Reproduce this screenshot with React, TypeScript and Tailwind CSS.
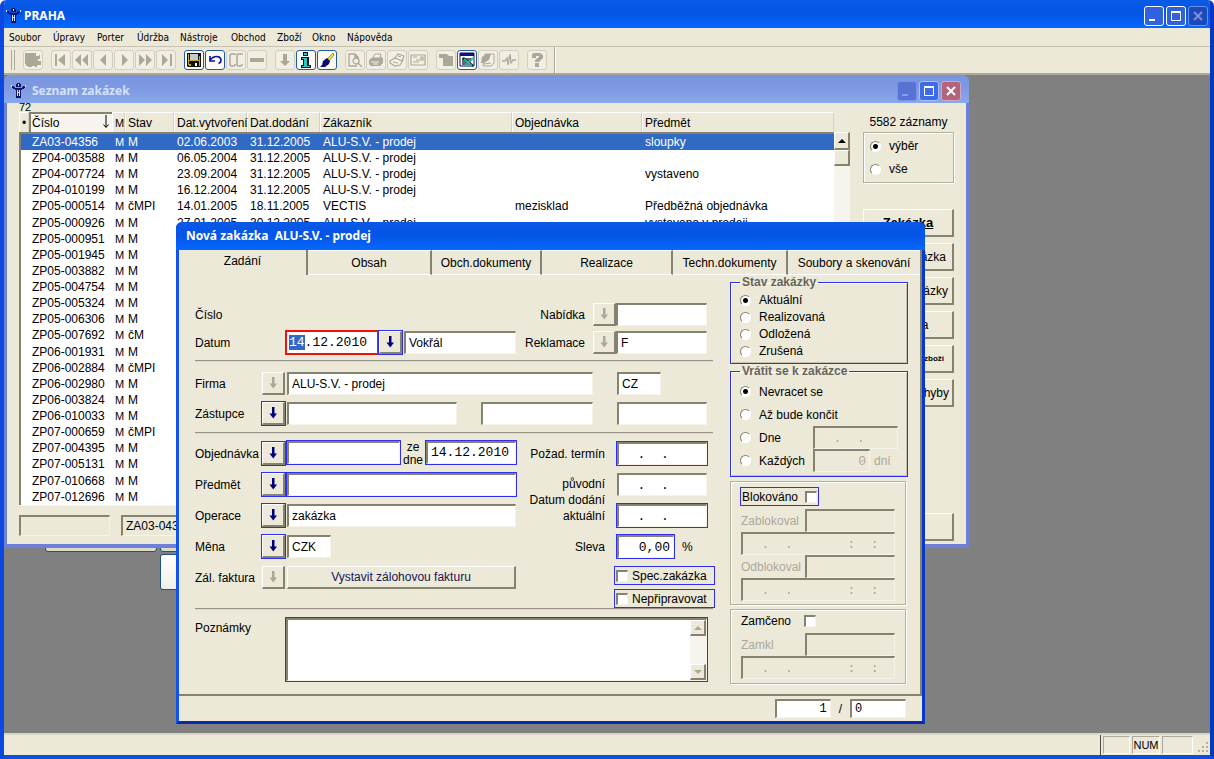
import React, { useEffect, useRef } from 'react';
import clsx from 'clsx';

const SUNKEN =
  'border-t-2 border-l-2 border-r border-b border-t-[#85826f] border-l-[#85826f] border-r-[#f6f4ea] border-b-[#f6f4ea]';
const RAISED =
  'border-t border-l border-r-2 border-b-2 border-t-white border-l-white border-r-[#85826f] border-b-[#85826f] bg-[#ece9d8]';
const BLUE_RING = 'ring-1 ring-[#2f2ff0]';

interface Order {
  id: string;
  stav: string;
  created?: string;
  delivery?: string;
  customer?: string;
  order?: string;
  subject?: string;
}

const ORDERS: Order[] = [
  { id: 'ZA03-04356', stav: 'M', created: '02.06.2003', delivery: '31.12.2005', customer: 'ALU-S.V. - prodej', subject: 'sloupky' },
  { id: 'ZP04-003588', stav: 'M', created: '06.05.2004', delivery: '31.12.2005', customer: 'ALU-S.V. - prodej' },
  { id: 'ZP04-007724', stav: 'M', created: '23.09.2004', delivery: '31.12.2005', customer: 'ALU-S.V. - prodej', subject: 'vystaveno' },
  { id: 'ZP04-010199', stav: 'M', created: '16.12.2004', delivery: '31.12.2005', customer: 'ALU-S.V. - prodej' },
  { id: 'ZP05-000514', stav: 'čMPI', created: '14.01.2005', delivery: '18.11.2005', customer: 'VECTIS', order: 'mezisklad', subject: 'Předběžná objednávka' },
  { id: 'ZP05-000926', stav: 'M', created: '27.01.2005', delivery: '30.12.2005', customer: 'ALU-S.V. - prodej', subject: 'vystaveno v prodeji' },
  { id: 'ZP05-000951', stav: 'M' },
  { id: 'ZP05-001945', stav: 'M' },
  { id: 'ZP05-003882', stav: 'M' },
  { id: 'ZP05-004754', stav: 'M' },
  { id: 'ZP05-005324', stav: 'M' },
  { id: 'ZP05-006306', stav: 'M' },
  { id: 'ZP05-007692', stav: 'čM' },
  { id: 'ZP06-001931', stav: 'M' },
  { id: 'ZP06-002884', stav: 'čMPI' },
  { id: 'ZP06-002980', stav: 'M' },
  { id: 'ZP06-003824', stav: 'M' },
  { id: 'ZP06-010033', stav: 'M' },
  { id: 'ZP07-000659', stav: 'čMPI' },
  { id: 'ZP07-004395', stav: 'M' },
  { id: 'ZP07-005131', stav: 'M' },
  { id: 'ZP07-010668', stav: 'M' },
  { id: 'ZP07-012696', stav: 'M' },
];

const MENU = [
  { label: 'Soubor', width: 'w-[44px]' },
  { label: 'Úpravy', width: 'w-[44px]' },
  { label: 'Porter', width: 'w-[40px]' },
  { label: 'Údržba', width: 'w-[43px]' },
  { label: 'Nástroje', width: 'w-[51px]' },
  { label: 'Obchod', width: 'w-[46px]' },
  { label: 'Zboží', width: 'w-[35px]' },
  { label: 'Okno', width: 'w-[35px]' },
  { label: 'Nápověda', width: 'w-[60px]' },
];

const G = '#aca899';

// Toolbar glyphs, drawn on a 16x16 grid
const GLYPHS: Record<string, React.ReactNode> = {
  door: <path fill={G} d="M0 1h11v3h3V3h1v4h-2v2h3v4h-4v2h-2v-1H7v1H3v-1H1v-2H0z" />,
  first: <path fill={G} d="M2 2h2v12H2zM12 2v12L5 8z" />,
  rewind: <path fill={G} d="M7 2v12L1 8zM14 2v12L8 8z" />,
  prev: <path fill={G} d="M11 2v12L5 8z" />,
  next: <path fill={G} d="M6 2v12l6-6z" />,
  forward: <path fill={G} d="M2 2v12l6-6zM9 2v12l6-6z" />,
  last: <path fill={G} d="M4 2v12l6-6zM12 2h2v12h-2z" />,
  save: (
    <>
      <path fill="#111" d="M1 1h14v14H2l-1-1z" />
      <path fill="#b8a83c" d="M2 2h1v11H2zM13 4h1v10h-1zM3 8h10v1H3zM3 12h2v2H3z" />
      <path fill="#c9c9c9" d="M4 2h8v6H4z" />
      <path fill="#fff" d="M9 11h2v3H9z" />
    </>
  ),
  undo: (
    <path fill="none" stroke="#0a12a0" strokeWidth="1.6" d="M3 4v5h5M3 8l3-2.500c3-2 8-1 8 2.500 0 2-1 3-2.500 3.500" />
  ),
  copy: <path fill="none" stroke={G} strokeWidth="1.500" d="M7 3V2H3L2 3v10l1 1h3l1-1v-1M14 3V2h-4L9 3v10l1 1h3l1-1v-1" />,
  minus: <path fill={G} d="M1 6h14v4H1z" />,
  down: <path fill={G} d="M6 2h4v7h3l-5 5-5-5h3z" />,
  info: (
    <>
      <path fill="#111" d="M5 0h5v4H5zM3 5h8v8h2v3H3v-3h2V8H3z" />
      <path fill="#27c7c7" d="M6 1h3v2H6zM4 6h5v8h3v1H4v-1h2V7H4z" />
    </>
  ),
  brush: (
    <>
      <path fill="#f2e233" stroke="#333" strokeWidth=".5" d="M14 1l1 2-5 6-2-2z" />
      <path fill="#0c0c78" d="M8 6l3 3-1 3-4 3H1l2-2 1-4z" />
    </>
  ),
  preview: (
    <path fill="none" stroke={G} strokeWidth="1.300" d="M10 14H2V2h6l3 3v2M8 2v3h3M9 6a3 3 0 1 0 .1 6A3 3 0 0 0 9 6M11 11l4 4" />
  ),
  print: (
    <>
      <path fill={G} d="M1 8l4-3h9l1 2v4l-3 3H3l-2-2z" />
      <path fill="#f4f2e8" stroke={G} d="M5 6l2-4h6l-1 4z" />
      <path stroke="#f4f2e8" d="M3 10h8M5 12h5" />
    </>
  ),
  cards: (
    <>
      <path fill="#f4f2e8" stroke={G} strokeWidth="1.200" d="M1 9l5-3 8 2-3 5-5 1-5-3z" />
      <path fill="#f4f2e8" stroke={G} strokeWidth="1.200" d="M6 6l3-4 6 2-2 5z" />
      <path stroke={G} d="M9 4l3 1M4 10l5 1" />
    </>
  ),
  mail: <path fill="none" stroke={G} strokeWidth="1.200" d="M1 3h14v10H1zM3 5h4M3 10h6M6 8h4M11 5h2v3h-2z" />,
  page: <path fill={G} d="M1 2h8l2 2h4v10H5V6H1z" />,
  excel: (
    <>
      <path fill="#fff" stroke="#111060" d="M1 1h14v13H1z" />
      <path fill="#111080" d="M1 1h14v3H1z" />
      <path fill="#666" d="M3 6h9v7H3z" />
      <path stroke="#111" strokeWidth="2.500" d="M4 6l10 8" />
      <path stroke="#23b5b0" strokeWidth="2" d="M6 14l8-8M5 7l8 7" />
    </>
  ),
  script: (
    <>
      <path fill="#f4f2e8" stroke={G} d="M5 2h9v9l-3 3H3z" />
      <path fill={G} d="M2 5l4-3h5l-2 6-5 3H1z" />
      <path stroke={G} d="M4 12l7-1" />
    </>
  ),
  pulse: <path fill="none" stroke={G} strokeWidth="1.300" d="M1 9h3l2-3 1 7 2-11 1 9 2-3h3" />,
  help: (
    <path fill={G} d="M3 2l2-1h6l3 2v3l-4 4H6V8l4-3V4H7v2H3zM6 11h4v4H6z" />
  ),
};

const TOOL_GROUPS: string[][] = [
  ['door'],
  ['first', 'rewind', 'prev', 'next', 'forward', 'last'],
  ['save', 'undo', 'copy', 'minus'],
  ['down', 'info', 'brush'],
  ['preview', 'print', 'cards', 'mail'],
  ['page', 'excel', 'script', 'pulse'],
  ['help'],
];

const ACTIVE_TOOLS = ['save', 'undo', 'info', 'brush', 'excel'];

function PorterIcon() {
  return (
    <svg viewBox="0 0 16 16" className="h-4 w-4 shrink-0" shapeRendering="crispEdges">
      <path fill="#0c1470" d="M7 0h3v1h1v3H6V1h1zM2 3h2v1h1v1h7V4h1V3h2v2h-1v1h-2v1h-1v8H6V7H5V6H3V5H2z" />
      <path fill="#dfe8ff" d="M8 1h1v2H8zM7 7h1v6H7zM9 7h1v6H9zM8 9h1v1H8zM1 2h1v2H1zM15 2h1v2h-1z" />
    </svg>
  );
}

interface CaptionButtonProps {
  kind: 'min' | 'max' | 'close';
  className: string;
  glyph?: string;
}

function CaptionButton({ kind, className, glyph = '#ffffff' }: CaptionButtonProps) {
  return (
    <button aria-label={kind} className={clsx('flex h-[20px] w-[20px] items-center justify-center rounded-[3px] border', className)}>
      <svg viewBox="0 0 14 14" className="h-[14px] w-[14px]" fill="none" stroke={glyph}>
        {kind === 'min' && <path strokeWidth="2" d="M2 11h6" />}
        {kind === 'max' && <path d="M2.500 3.500h9v8h-9zM2 2.500h10" />}
        {kind === 'close' && <path strokeWidth="2" d="M3 3l8 8M11 3l-8 8" />}
      </svg>
    </button>
  );
}

interface FieldProps {
  label: string;
  value?: string;
  width: string;
  mono?: boolean;
  blue?: boolean;
  muted?: boolean;
  right?: boolean;
  id?: string;
}

function Field({ label, value = '', width, mono, blue, muted, right, id }: FieldProps) {
  return (
    <input
      id={id}
      aria-label={label}
      defaultValue={value}
      className={clsx(
        'h-[23px] shrink-0 px-[3px] outline-none',
        SUNKEN,
        width,
        mono && "font-['Liberation_Mono',monospace] text-[13px]",
        blue && BLUE_RING,
        muted ? 'bg-[#ece9d8] text-[#aca899]' : 'bg-white',
        right && 'text-right'
      )}
    />
  );
}

function ArrowButton({ active }: { active?: boolean }) {
  return (
    <button
      aria-label="Vybrat"
      className={clsx('flex h-[23px] w-[23px] shrink-0 items-center justify-center', RAISED, active && BLUE_RING)}
    >
      <svg viewBox="0 0 12 14" className="h-[14px] w-3">
        <path fill={active ? '#00007c' : '#aca899'} d="M5 1h2.500v6.500H10L6.250 12.500 2.500 7.500H5z" />
      </svg>
    </button>
  );
}

function Radio({ name, label, checked }: { name: string; label: string; checked?: boolean }) {
  return (
    <label className="flex items-center gap-2">
      <input
        type="radio"
        name={name}
        defaultChecked={checked}
        className="h-[11px] w-[11px] appearance-none rounded-full border border-t-[#85826f] border-l-[#85826f] border-r-white border-b-white bg-white checked:bg-[radial-gradient(circle,#000_2px,#fff_3px)]"
      />
      {label}
    </label>
  );
}

function CheckBox({ id }: { id?: string }) {
  return <input id={id} type="checkbox" className={clsx('h-3 w-3 shrink-0 appearance-none bg-white', SUNKEN)} />;
}

function Rule() {
  return <hr className="h-[2px] w-[518px] border-t border-b border-t-[#96938a] border-b-[#dcdad0]" />;
}

function OrderList() {
  const th = (text: string) => (
    <div className="h-5 border-t border-l border-r border-t-white border-l-white border-r-[#d5d2c0] pl-[2px] leading-5">{text}</div>
  );
  return (
    <section className="absolute top-0 left-0 flex h-[473px] w-[965px] flex-col rounded-t-md border-r-[3px] border-b-[4px] border-l-[3px] border-[#6f80d8] bg-[#ece9d8]">
      <header className="-mx-[3px] flex h-7 shrink-0 items-center gap-1.5 rounded-t-md bg-gradient-to-b from-[#7a93df] via-[#7f9be3] to-[#88a9ea] pt-1 pr-2 pl-1.5">
        <PorterIcon />
        <h2 className="flex-1 font-['Noto_Sans',sans-serif] text-[12px] font-bold text-[#d5e1f8]">Seznam zakázek</h2>
        <div className="flex gap-[2px]">
          <CaptionButton kind="min" className="border-[#7b90e0] bg-[#5873d6]" glyph="#8b9fe8" />
          <CaptionButton kind="max" className="border-[#a9c0f5] bg-[#3f6be4]" />
          <CaptionButton kind="close" className="border-[#c8a9c8] bg-[#b4637d]" />
        </div>
      </header>

      <div className="flex flex-1 gap-[13px] pl-3">
        <div className="flex w-[831px] flex-col">
          <div className="h-[9px] text-[11px] leading-[9px]">72</div>
          <div className="flex border-b border-[#f6f4ea]">
            <table className="w-[815px] table-fixed border-separate border-spacing-0 text-left whitespace-nowrap">
              <colgroup>
                <col className="w-[10px]" />
                <col className="w-[83px]" />
                <col className="w-[13px]" />
                <col className="w-[49px]" />
                <col className="w-[73px]" />
                <col className="w-[73px]" />
                <col className="w-[192px]" />
                <col className="w-[130px]" />
                <col />
              </colgroup>
              <thead>
                <tr className="[&>th]:border-b-2 [&>th]:border-[#85826f] [&>th]:p-0 [&>th]:font-normal">
                  <th>{th('•')}</th>
                  <th>
                    <div className="flex h-5 justify-between border-t-2 border-l-2 border-[#85826f] bg-[#f6f4ec] pr-[3px] pl-px leading-[18px]">
                      Číslo
                      <svg viewBox="0 0 6 14" className="mt-px h-[14px] w-[6px]" fill="none" stroke="#000">
                        <path d="M3 0v12M.5 9.500L3 12.500l2.500-3" />
                      </svg>
                    </div>
                  </th>
                  <th className="text-[11px]">{th('M')}</th>
                  <th>{th('Stav')}</th>
                  <th>{th('Dat.vytvoření')}</th>
                  <th>{th('Dat.dodání')}</th>
                  <th>{th('Zákazník')}</th>
                  <th>{th('Objednávka')}</th>
                  <th>{th('Předmět')}</th>
                </tr>
              </thead>
              <tbody className="bg-white">
                {ORDERS.map((o, i) => (
                  <tr
                    key={o.id}
                    className={clsx(
                      'leading-4 [&>td]:p-0 [&>td]:pl-[3px] [&>td:first-child]:border-l-2 [&>td:first-child]:border-[#85826f]',
                      i % 8 === 5 ? 'h-[17px]' : 'h-4',
                      i === 0 && 'bg-[#316ac5] text-white'
                    )}
                  >
                    <td></td>
                    <td>{o.id}</td>
                    <td className="text-[11px]">M</td>
                    <td>{o.stav}</td>
                    <td>{o.created}</td>
                    <td>{o.delivery}</td>
                    <td>{o.customer}</td>
                    <td>{o.order}</td>
                    <td>{o.subject}</td>
                  </tr>
                ))}
              </tbody>
            </table>
            <div className="mt-5 flex w-4 flex-col bg-[#f6f4ec]">
              <button aria-label="Nahoru" className={clsx('flex h-[18px] items-center justify-center', RAISED)}>
                <svg viewBox="0 0 8 4" className="h-1 w-2">
                  <path d="M4 0l4 4H0z" />
                </svg>
              </button>
              <div className={clsx('h-4', RAISED)} />
            </div>
          </div>
          <div className="mt-[9px] flex gap-[11px]">
            <input aria-label="Filtr" className={clsx('h-[21px] w-[91px] bg-[#ece9d8] px-[3px]', SUNKEN)} />
            <input aria-label="Hledat" defaultValue="ZA03-04356" className={clsx('h-[21px] w-[130px] bg-[#ece9d8] px-[3px]', SUNKEN)} />
          </div>
        </div>

        <aside className="flex w-[91px] flex-col pb-[3px]">
          <p className="mt-3 h-[17px] text-center leading-[14px]">5582 záznamy</p>
          <div className="flex h-[51px] flex-col justify-center gap-[8px] border border-[#b3b0a0] pl-1.5 shadow-[1px_1px_0_#fff,inset_1px_1px_0_#fff] leading-[15px]">
            <Radio name="rozsah" label="výběr" checked />
            <Radio name="rozsah" label="vše" />
          </div>
          <div className="mt-[26px] flex flex-col gap-1.5 whitespace-nowrap">
            <button className={clsx('h-7 text-[13px] font-bold underline', RAISED)}>Zakázka</button>
            <button className={clsx('h-7 pr-1.5 text-right', RAISED)}>Zakázka</button>
            <button className={clsx('h-7 pr-1 text-right', RAISED)}>Zakázky</button>
            <button className={clsx('h-7', RAISED)}>Faktura</button>
            <button className={clsx('h-7 pr-2 text-right text-[8px] font-bold', RAISED)}>Zásoba zboží</button>
            <button className={clsx('h-7 pr-[3px] text-right', RAISED)}>Pohyby</button>
          </div>
          <button aria-label="Zavřít" className={clsx('mt-auto h-7', RAISED)} />
        </aside>
      </div>
    </section>
  );
}

const TABS = [
  { label: 'Obsah', width: 'w-[124px]' },
  { label: 'Obch.dokumenty', width: 'w-[110px]' },
  { label: 'Realizace', width: 'w-[131px]' },
  { label: 'Techn.dokumenty', width: 'w-[115px]' },
  { label: 'Soubory a skenování', width: 'flex-1' },
];

function NewOrderForm() {
  const dateRef = useRef<HTMLInputElement>(null);

  useEffect(() => {
    // day part is selected when the form opens
    dateRef.current?.focus();
    dateRef.current?.setSelectionRange(0, 2);
  }, []);

  return (
    <div className="flex w-[520px] flex-col pt-[27px]">
      <div className="flex h-[25px] items-center justify-between pr-2">
        <span>Číslo</span>
        <div className="flex items-center">
          <label htmlFor="nabidka" className="mr-2">Nabídka</label>
          <ArrowButton />
          <Field id="nabidka" label="Nabídka" width="w-[91px]" />
        </div>
      </div>
      <div className="mt-[3px] flex h-[25px] items-center pr-2">
        <label htmlFor="datum" className="w-[92px]">Datum</label>
        <input
          id="datum"
          ref={dateRef}
          defaultValue="14.12.2010"
          className="h-[21px] w-[90px] bg-white px-[2px] font-['Liberation_Mono',monospace] text-[13px] ring-2 ring-[#f01010] outline-none selection:bg-[#316ac5] selection:text-white"
        />
        <div className="ml-[2px] flex gap-[2px]">
          <ArrowButton active />
          <Field label="Vyřizuje" value="Vokřál" width="w-[112px]" />
        </div>
        <label htmlFor="reklamace" className="mr-2 ml-auto">Reklamace</label>
        <ArrowButton />
        <Field id="reklamace" label="Reklamace" value="F" width="w-[91px]" />
      </div>
      <div className="mt-[5px]">
        <Rule />
      </div>
      <div className="mt-[9px] flex h-[25px] items-center">
        <label htmlFor="firma" className="w-[67px]">Firma</label>
        <ArrowButton />
        <div className="ml-[2px] flex gap-6">
          <Field id="firma" label="Firma" value="ALU-S.V. - prodej" width="w-[306px]" />
          <Field label="Země" value="CZ" width="w-[44px]" />
        </div>
      </div>
      <div className="mt-[5px] flex h-[25px] items-center">
        <label htmlFor="zastupce" className="w-[67px]">Zástupce</label>
        <ArrowButton active />
        <div className="ml-[2px] flex gap-6">
          <Field id="zastupce" label="Zástupce" width="w-[170px]" />
          <Field label="Telefon" width="w-[112px]" />
          <Field label="Mobil" width="w-[90px]" />
        </div>
      </div>
      <div className="mt-[6px]">
        <Rule />
      </div>

      <div className="mt-[7px] flex justify-between">
        <div className="flex flex-col gap-1.5 [&>div]:flex [&>div]:h-[25px] [&>div]:items-center">
          <div>
            <label htmlFor="objednavka" className="w-[67px]">Objednávka</label>
            <ArrowButton active />
            <div className="ml-[2px] flex">
              <Field id="objednavka" label="Objednávka" width="w-[113px]" blue />
              <span className="flex w-[26px] flex-col justify-center text-center leading-[13px]">
                <span>ze</span>
                <span>dne</span>
              </span>
              <Field label="Ze dne" value="14.12.2010" width="w-[90px]" mono blue />
            </div>
          </div>
          <div>
            <label htmlFor="predmet" className="w-[67px]">Předmět</label>
            <ArrowButton active />
            <div className="ml-[2px] flex">
              <Field id="predmet" label="Předmět" width="w-[229px]" blue />
            </div>
          </div>
          <div>
            <label htmlFor="operace" className="w-[67px]">Operace</label>
            <ArrowButton active />
            <div className="ml-[2px] flex">
              <Field id="operace" label="Operace" value="zakázka" width="w-[229px]" />
            </div>
          </div>
          <div>
            <label htmlFor="mena" className="w-[67px]">Měna</label>
            <ArrowButton active />
            <div className="ml-[2px] flex">
              <Field id="mena" label="Měna" value="CZK" width="w-[44px]" />
            </div>
          </div>
          <div>
            <span className="w-[67px]">Zál. faktura</span>
            <ArrowButton />
            <button className={clsx('ml-[2px] h-[23px] w-[229px] text-[#15155c]', RAISED)}>Vystavit zálohovou fakturu</button>
          </div>
        </div>

        <div className="flex w-[187px] flex-col text-right">
          <div className="flex h-[25px] items-center gap-3">
            <label htmlFor="termin" className="w-[77px]">Požad. termín</label>
            <Field id="termin" label="Požadovaný termín" value="  .  ." width="w-[90px]" mono blue />
          </div>
          <div className="mt-1.5 flex h-14 items-center gap-3">
            <div className="flex w-[77px] flex-col leading-4 whitespace-nowrap">
              <span>původní</span>
              <span>Datum dodání</span>
              <span>aktuální</span>
            </div>
            <div className="flex h-full flex-col justify-between py-px">
              <Field label="Datum dodání původní" value="  .  ." width="w-[90px]" mono />
              <Field label="Datum dodání aktuální" value="  .  ." width="w-[90px]" mono blue />
            </div>
          </div>
          <div className="mt-1.5 flex h-[25px] items-center gap-3">
            <label htmlFor="sleva" className="w-[77px]">Sleva</label>
            <Field id="sleva" label="Sleva" value="0,00" width="w-[57px]" mono blue right />
            <span className="-ml-1">%</span>
          </div>
          <div className="mt-[7px] flex flex-col items-end gap-1">
            <label className="flex h-[19px] w-[101px] items-center gap-1 border border-[#2f2ff0] pl-px">
              <CheckBox />
              Spec.zakázka
            </label>
            <label className="flex h-[19px] w-[101px] items-center gap-1 border border-[#2f2ff0] pl-px">
              <CheckBox />
              Nepřipravovat
            </label>
          </div>
        </div>
      </div>
      <Rule />

      <div className="mt-2 flex">
        <label htmlFor="poznamky" className="w-[91px] pt-px">Poznámky</label>
        <div className={clsx('flex h-[63px] w-[421px] bg-white', SUNKEN, BLUE_RING)}>
          <textarea id="poznamky" className="h-full flex-1 resize-none outline-none" />
          <div className="flex w-4 flex-col justify-between bg-[#f6f4ec]">
            <button aria-label="Nahoru" className={clsx('flex h-4 items-center justify-center', RAISED)}>
              <svg viewBox="0 0 8 4" className="h-1 w-2">
                <path fill={G} d="M4 0l4 4H0z" />
              </svg>
            </button>
            <button aria-label="Dolů" className={clsx('flex h-4 items-center justify-center', RAISED)}>
              <svg viewBox="0 0 8 4" className="h-1 w-2">
                <path fill={G} d="M4 4L0 0h8z" />
              </svg>
            </button>
          </div>
        </div>
      </div>
    </div>
  );
}

function StatusPanels() {
  const fieldset =
    'w-[178px] border border-[#2f2ff0] px-[9px] shadow-[inset_1px_1px_0_#fff,inset_-1px_-1px_0_#c4c1b4]';
  const legend = 'px-[2px] text-[12px] leading-3 font-bold text-[#66645c]';
  const box = 'w-[176px] border border-[#b3b0a0] pr-2.5 pl-[10px] shadow-[1px_1px_0_#fff,inset_1px_1px_0_#fff]';
  return (
    <div className="flex flex-col pt-px">
      <fieldset className={clsx(fieldset, 'pt-1 pb-[3px]')}>
        <legend className={legend}>Stav zakázky</legend>
        <div className="flex flex-col leading-[17px]">
          <Radio name="stav" label="Aktuální" checked />
          <Radio name="stav" label="Realizovaná" />
          <Radio name="stav" label="Odložená" />
          <Radio name="stav" label="Zrušená" />
        </div>
      </fieldset>
      <fieldset className={clsx(fieldset, 'mt-px pt-[3px] pb-1')}>
        <legend className={legend}>Vrátit se k zakázce</legend>
        <div className="flex flex-col [&>div]:flex [&>div]:h-[23px] [&>div]:items-center">
          <div>
            <Radio name="navrat" label="Nevracet se" checked />
          </div>
          <div>
            <Radio name="navrat" label="Až bude končit" />
          </div>
          <div className="justify-between">
            <Radio name="navrat" label="Dne" />
            <Field label="Dne" value="  .  ." width="w-[85px]" mono muted />
          </div>
          <div>
            <div className="w-[73px]">
              <Radio name="navrat" label="Každých" />
            </div>
            <Field label="Počet dní" value="0" width="w-[57px]" mono muted right />
            <span className="ml-1 text-[#aca899]">dní</span>
          </div>
        </div>
      </fieldset>
      <div className={clsx(box, 'mt-1 pt-[5px] pb-[3px]')}>
        <label className="-ml-px flex h-[19px] w-[79px] items-center justify-between border border-[#2f2ff0] px-px">
          Blokováno
          <CheckBox />
        </label>
        <div className="mt-[3px] flex flex-col text-[#aca899]">
          <div className="flex items-center justify-between">
            <label htmlFor="zablokoval">Zablokoval</label>
            <Field id="zablokoval" label="Zablokoval" width="w-[90px]" muted />
          </div>
          <Field label="Zablokováno kdy" value="  .  .       :  :" width="w-full" mono muted />
          <div className="flex items-center justify-between">
            <label htmlFor="odblokoval">Odblokoval</label>
            <Field id="odblokoval" label="Odblokoval" width="w-[90px]" muted />
          </div>
          <Field label="Odblokováno kdy" value="  .  .       :  :" width="w-full" mono muted />
        </div>
      </div>
      <div className={clsx(box, 'mt-1 pt-px pb-1')}>
        <label className="flex h-5 w-[75px] items-center justify-between">
          Zamčeno
          <CheckBox />
        </label>
        <div className="mt-[2px] flex flex-col text-[#aca899]">
          <div className="flex items-center justify-between">
            <label htmlFor="zamkl">Zamkl</label>
            <Field id="zamkl" label="Zamkl" width="w-[90px]" muted />
          </div>
          <Field label="Zamčeno kdy" value="  .  .       :  :" width="w-full" mono muted />
        </div>
      </div>
    </div>
  );
}

function NewOrderDialog() {
  return (
    <section className="absolute top-[147px] left-[172px] flex h-[502px] w-[749px] flex-col rounded-t-md border-r-[3px] border-b-[3px] border-l-[3px] border-r-[#0838c8] border-b-[#0828b0] border-l-[#1054e8] bg-[#ece9d8]">
      <header className="-mx-[3px] flex h-7 shrink-0 items-center rounded-t-md bg-gradient-to-b from-[#0a58e8] via-[#0455e6] to-[#0668ff] pl-2.5">
        <h2 className="font-['Noto_Sans',sans-serif] text-[12px] font-bold whitespace-pre text-white">
          {'Nová zakázka  ALU-S.V. - prodej'}
        </h2>
      </header>
      <div className="flex flex-1 flex-col border-r-2 border-b-2 border-[#85826f]">
        <div className="flex h-[25px]" role="tablist">
          <button role="tab" className="w-[129px] border-r-2 border-[#85826f] pb-1 text-center">
            Zadání
          </button>
          {TABS.map((t, i) => (
            <button
              key={t.label}
              role="tab"
              className={clsx(
                'border-t border-b border-t-white border-b-white text-center whitespace-nowrap',
                i < TABS.length - 1 && 'border-r-2 border-r-[#85826f]',
                t.width
              )}
            >
              {t.label}
            </button>
          ))}
        </div>
        <div className="flex gap-[15px] pl-4">
          <NewOrderForm />
          <StatusPanels />
        </div>
      </div>
      <footer className="flex h-[25px] items-center justify-end gap-2 pr-4">
        <input
          aria-label="Záznam"
          defaultValue="1"
          className={clsx("h-[19px] w-[56px] bg-white px-[3px] text-right font-['Liberation_Mono',monospace] text-[12px]", SUNKEN)}
        />
        <span>/</span>
        <input
          aria-label="Celkem"
          defaultValue="0"
          className={clsx("h-[19px] w-[56px] bg-white px-[3px] font-['Liberation_Mono',monospace] text-[12px]", SUNKEN)}
        />
      </footer>
    </section>
  );
}

export default function App() {
  return (
    <div className="flex min-h-screen flex-col overflow-hidden rounded-t-md border-r-4 border-b-4 border-l-4 border-r-[#0636c4] border-b-[#0a50e0] border-l-[#0a48e0] bg-[#ece9d8] font-['Liberation_Sans',Arial,sans-serif] text-[12px] text-black">
      <header className="-mx-1 flex h-7 shrink-0 items-center gap-[3px] rounded-t-md bg-gradient-to-b from-[#0a5ae8] via-[#0455e6] to-[#0668ff] pt-1 pr-1.5 pl-[5px]">
        <PorterIcon />
        <h1 className="flex-1 font-['Noto_Sans',sans-serif] text-[12px] font-bold text-white">PRAHA</h1>
        <div className="flex gap-[2px]">
          <CaptionButton kind="min" className="border-white bg-[#2f62dc]" />
          <CaptionButton kind="max" className="border-white bg-[#2f62dc]" />
          <CaptionButton kind="close" className="border-[#6f8fe0] bg-[#1c49c0]" glyph="#7f93d0" />
        </div>
      </header>

      <nav className="flex h-[18px] items-center pl-[5px] font-['DejaVu_Sans_Condensed','DejaVu_Sans',sans-serif] text-[10px]">
        {MENU.map((m) => (
          <button key={m.label} className={clsx('text-left', m.width)}>
            {m.label}
          </button>
        ))}
      </nav>

      <div className="flex h-[29px] shrink-0 items-stretch border-t border-b-2 border-t-[#c5c2b2] border-b-[#aca899]">
        <div className="flex items-center gap-2 border-r border-[#aca899] pr-[7px] pl-[7px] shadow-[1px_0_0_#fff]">
          <span className="flex h-5 w-1 gap-[3px] border-r border-l border-[#aca899]" />
          {TOOL_GROUPS.map((group) => (
            <div key={group[0]} className="flex gap-px">
              {group.map((tool) => (
                <button
                  key={tool}
                  aria-label={tool}
                  className={clsx(
                    'flex h-5 w-5 items-center justify-center rounded-[3px] border',
                    ACTIVE_TOOLS.includes(tool) ? 'border-[#2a5a94] bg-[#fbfaf6]' : 'border-[#d2cfc0] bg-[#f1efe4]'
                  )}
                >
                  <svg viewBox="0 0 16 16" className="h-4 w-4">
                    {GLYPHS[tool]}
                  </svg>
                </button>
              ))}
            </div>
          ))}
        </div>
      </div>

      <main className="relative min-h-[655px] flex-1 overflow-hidden bg-[#808080]">
        {/* minimised windows peeking out behind the list */}
        <div className="absolute top-[455px] left-[41px] h-[22px] w-[112px] rounded-[3px] border border-[#1c5180] bg-[#dcdacb]" />
        <div className="absolute top-[455px] left-[156px] h-[22px] w-[112px] rounded-[3px] border border-[#1c5180] bg-[#dcdacb]" />
        <div className="absolute top-[479px] left-[156px] h-9 w-[112px] rounded-[3px] border border-[#1c5180] bg-gradient-to-b from-white to-[#f0efe8]" />
        <OrderList />
        <NewOrderDialog />
      </main>

      <footer className="flex h-[22px] shrink-0 items-center justify-end border-t-2 border-[#d8d5c4]">
        <div className="flex h-full items-center gap-[2px] border-l border-[#4a4a44] pl-[2px] text-[11px]">
          <span className="h-[18px] w-[27px] border border-t-[#aca899] border-l-[#aca899] border-r-white border-b-white" />
          <span className="flex h-[18px] w-[28px] items-center justify-center border border-t-[#aca899] border-l-[#aca899] border-r-white border-b-white">
            NUM
          </span>
          <span className="h-[18px] w-[31px] border border-t-[#aca899] border-l-[#aca899] border-r-white border-b-white" />
          <svg viewBox="0 0 12 12" className="mt-1 mr-px ml-[2px] h-3 w-3" fill="#b3b0a0">
            <path d="M9 1h2v2H9zM9 5h2v2H9zM5 5h2v2H5zM9 9h2v2H9zM5 9h2v2H5zM1 9h2v2H1z" />
          </svg>
        </div>
      </footer>
    </div>
  );
}
